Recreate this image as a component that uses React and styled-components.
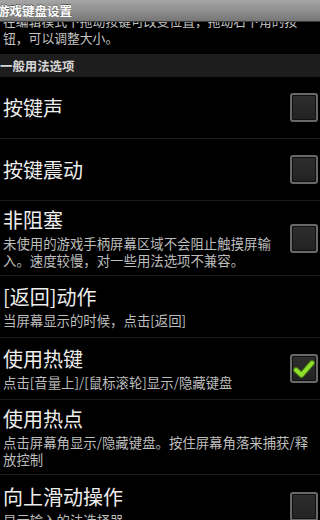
import React from "react";
import styled, { createGlobalStyle } from "styled-components";

const GlobalStyle = createGlobalStyle`
	html, body {
		margin: 0;
		padding: 0;
		background: #000;
	}
	body {
		font-family: "Noto Sans CJK SC", "Noto Sans", sans-serif;
	}
`;

const Screen = styled.div`
	width: 320px;
	height: 520px;
	display: flex;
	flex-direction: column;
	overflow: hidden;
	background: #000;
`;

const TitleBar = styled.div`
	flex: 0 0 21px;
	display: flex;
	align-items: center;
	background: linear-gradient(#a6a6a6, #8a8a8a 60%, #767676);
	border-bottom: 1px solid #3a3a3a;
	box-sizing: border-box;
	position: relative;
	z-index: 1;
`;

const TitleText = styled.span`
	margin-left: -3px;
	color: #fff;
	font-size: 12.5px;
	font-weight: 700;
	line-height: 21px;
	text-shadow: 0 -1px 0 rgba(0, 0, 0, 0.45);
	white-space: nowrap;
`;

const Viewport = styled.div`
	flex: 1;
	overflow: hidden;
`;

/* the list is scrolled a little: first line of the intro sits under the title bar */
const ScrollBody = styled.div`
	margin-top: -10px;
`;

const Intro = styled.div`
	padding: 0 0 8px 3px;
	color: #c4c4c4;
	font-size: 12.8px;
	line-height: 17px;
`;

const IntroLine = styled.div`
	white-space: nowrap;
	overflow: hidden;
`;

const Category = styled.div`
	height: 23px;
	display: flex;
	align-items: center;
	background: #1d1d1d;
	color: #d6d6d6;
	font-size: 12.4px;
	font-weight: 700;
`;

const Row = styled.div`
	display: flex;
	align-items: center;
	min-height: 62px;
	padding: 6px 2px 6px 3px;
	box-sizing: border-box;
	border-bottom: 1px solid #1c1c1c;

	&:last-child {
		border-bottom: none;
	}
`;

const Texts = styled.div`
	flex: 1;
	min-width: 0;
`;

const Title = styled.div`
	color: #eeeeee;
	font-size: 20px;
	line-height: 26px;
	white-space: nowrap;
`;

const Summary = styled.div`
	margin-top: 2px;
	color: #bdbdbd;
	font-size: 13.4px;
	line-height: 17px;
`;

const Box = styled.div`
	flex: 0 0 auto;
	width: 28px;
	height: 29px;
	margin-left: 8px;
	box-sizing: border-box;
	border: 2px solid #686868;
	border-radius: 3px;
	background: linear-gradient(#2e2e2e, #222);
	box-shadow: inset 0 0 0 1px #111;
	display: flex;
	align-items: center;
	justify-content: center;
`;

const Check = () => (
	<svg width="22" height="20" viewBox="0 0 22 20">
		<path
			d="M3 11 L8.5 16 L19 4"
			fill="none"
			stroke="#3f6d10"
			strokeWidth="6"
			strokeLinecap="round"
			strokeLinejoin="round"
		/>
		<path
			d="M3 11 L8.5 16 L19 4"
			fill="none"
			stroke="#8ee02c"
			strokeWidth="4"
			strokeLinecap="round"
			strokeLinejoin="round"
		/>
	</svg>
);

const options = [
	{ title: "按键声", box: true },
	{ title: "按键震动", box: true },
	{
		title: "非阻塞",
		summary: "未使用的游戏手柄屏幕区域不会阻止触摸屏输入。速度较慢，对一些用法选项不兼容。",
		box: true
	},
	{ title: "[返回]动作", summary: "当屏幕显示的时候，点击[返回]" },
	{ title: "使用热键", summary: "点击[音量上]/[鼠标滚轮]显示/隐藏键盘", box: true, checked: true },
	{ title: "使用热点", summary: "点击屏幕角显示/隐藏键盘。按住屏幕角落来捕获/释放控制" },
	{ title: "向上滑动操作", summary: "显示输入的法选择器", box: true }
];

const App = () => (
	<>
		<GlobalStyle />
		<Screen>
			<TitleBar>
				<TitleText>游戏键盘设置</TitleText>
			</TitleBar>
			<Viewport>
				<ScrollBody>
					<Intro>
						<IntroLine>在编辑模式下拖动按键可改变位置，拖动右下角的按</IntroLine>
						<IntroLine>钮，可以调整大小。</IntroLine>
					</Intro>
					<Category>一般用法选项</Category>
					{options.map(opt => (
						<Row key={opt.title}>
							<Texts>
								<Title>{opt.title}</Title>
								{opt.summary && <Summary>{opt.summary}</Summary>}
							</Texts>
							{opt.box && <Box>{opt.checked && <Check />}</Box>}
						</Row>
					))}
				</ScrollBody>
			</Viewport>
		</Screen>
	</>
);

export default App;
